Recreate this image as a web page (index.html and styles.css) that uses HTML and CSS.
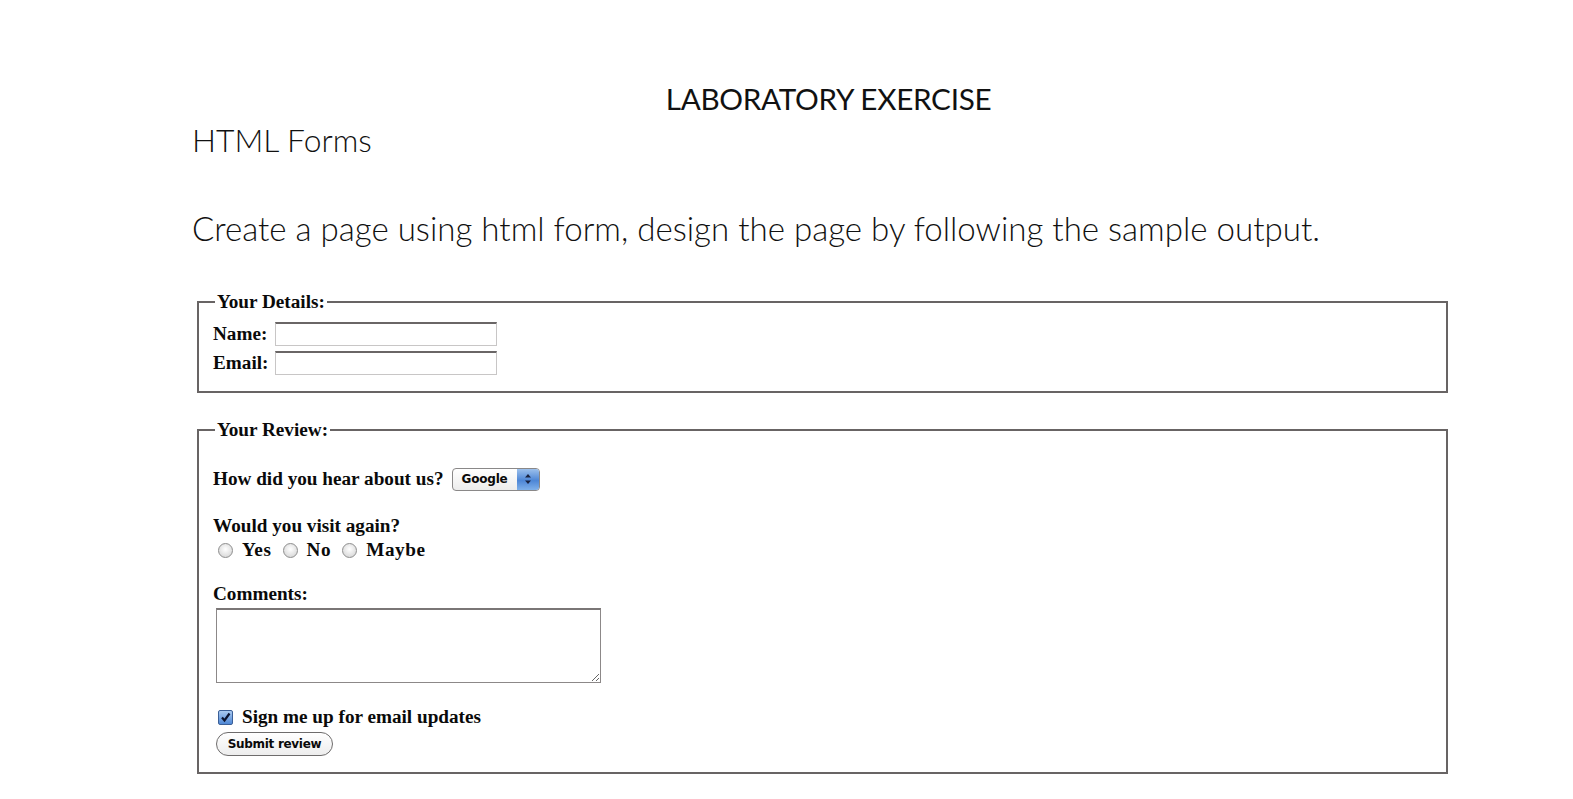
FILE: index.html
```html
<!DOCTYPE html>
<html lang="en">
<head>
<meta charset="utf-8">
<title>Laboratory Exercise</title>
<link rel="stylesheet" href="styles.css">
</head>
<body>
<main class="page">
  <h1 class="title">LABORATORY EXERCISE</h1>
  <h2 class="subtitle">HTML Forms</h2>
  <p class="instructions">Create a page using html form, design the page by following the sample output.</p>

  <form class="sample">
    <fieldset class="fs fs-details">
      <legend class="legend">Your Details:</legend>
      <div class="row"><label class="lbl" for="name">Name:</label><input class="text" id="name" type="text"></div>
      <div class="row"><label class="lbl" for="email">Email:</label><input class="text" id="email" type="text"></div>
    </fieldset>

    <fieldset class="fs fs-review">
      <legend class="legend">Your Review:</legend>
      <div class="line hear">How did you hear about us?
        <span class="select">
          <span class="select-text">Google</span>
          <span class="select-arrows">
            <svg width="8" height="12" viewBox="0 0 8 12"><path d="M4 1 L7 4.5 H1 Z M4 11 L7 7.5 H1 Z" fill="#1a2340"/></svg>
          </span>
        </span>
      </div>
      <div class="line visit">Would you visit again?</div>
      <div class="line radios">
        <span class="radio"></span><span class="rlabel">Yes</span>
        <span class="radio"></span><span class="rlabel">No</span>
        <span class="radio"></span><span class="rlabel">Maybe</span>
      </div>
      <div class="line comments">Comments:</div>
      <textarea class="area"></textarea>
      <div class="line signup">
        <span class="check"><svg width="13" height="13" viewBox="0 0 13 13"><path d="M3 6.5 L5.5 9.5 L10.5 2.5" fill="none" stroke="#0c1430" stroke-width="2.2"/></svg></span>
        Sign me up for email updates
      </div>
      <div class="btn-row"><span class="button">Submit review</span></div>
    </fieldset>
  </form>
</main>
</body>
</html>
```

FILE: styles.css
```css
html, body {
  margin: 0;
  padding: 0;
  background: #ffffff;
}

.page {
  width: 1273px;
  margin-left: 192px;
  padding-top: 81px;
  color: #111;
}

.title {
  margin: 0;
  text-align: center;
  font-family: Lato, "Open Sans", sans-serif;
  font-weight: 400;
  font-size: 29.7px;
  line-height: 36px;
  letter-spacing: -0.3px;
}

.subtitle {
  margin: 5px 0 0 0;
  font-family: Lato, "Open Sans", sans-serif;
  font-weight: 300;
  font-size: 31.8px;
  line-height: 36px;
}

.instructions {
  margin: 51px 0 0 0;
  font-family: Lato, "Open Sans", sans-serif;
  font-weight: 300;
  font-size: 33.1px;
  line-height: 38px;
}

.sample {
  margin-top: 43px;
  width: 1256px;
  font-family: "Liberation Serif", "Times New Roman", serif;
  font-weight: 700;
  font-size: 19.2px;
  color: #0a0a0a;
}

.fs {
  margin: 0 0 0 5px;
  border: 2px solid #686464;
  padding: 0 14px 14px 14px;
  min-width: 0;
}

.fs-details {
  padding-top: 5px;
}

.legend {
  padding: 0 2px;
  margin-left: 2px;
  line-height: 24px;
}

.row {
  display: flex;
  align-items: center;
  height: 29px;
}

.lbl {
  width: 62px;
}

.text {
  box-sizing: border-box;
  width: 222px;
  height: 24px;
  margin: 0;
  border: 1px solid #c8c6c6;
  border-top: 2px solid #6a6666;
  background: #fff;
}

.fs-review {
  margin-top: 25px;
  padding-bottom: 16px;
}

.line {
  line-height: 24px;
  display: flex;
  align-items: center;
}

.hear {
  margin-top: 25px;
}

.select {
  display: inline-flex;
  align-items: stretch;
  box-sizing: border-box;
  width: 88px;
  height: 23px;
  margin-left: 8px;
  border: 1px solid #8a8888;
  border-radius: 4px;
  overflow: hidden;
  background: linear-gradient(#ffffff, #ececec);
  font-family: "DejaVu Sans", sans-serif;
  font-weight: 700;
  font-size: 12px;
  letter-spacing: -0.2px;
}

.select-text {
  flex: 1;
  display: flex;
  align-items: center;
  padding-left: 9px;
}

.select-arrows {
  width: 22px;
  display: flex;
  align-items: center;
  justify-content: center;
  background: linear-gradient(#9cc0ec, #4d86d6 55%, #7fb0ea);
}

.visit {
  margin-top: 23px;
}

.radio {
  display: inline-block;
  box-sizing: border-box;
  width: 15px;
  height: 15px;
  border-radius: 50%;
  border: 1px solid #8e8e8e;
  background: radial-gradient(circle at 50% 40%, #ffffff, #cfcfcf);
  margin: 0 9px 0 5px;
}

.rlabel {
  margin-right: 6px;
  letter-spacing: 0.6px;
}

.comments {
  margin-top: 20px;
}

.area {
  display: block;
  box-sizing: border-box;
  width: 385px;
  height: 75px;
  margin: 2px 0 0 3px;
  border: 1px solid #8c8888;
  border-top: 2px solid #7a7676;
  resize: both;
}

.signup {
  margin-top: 22px;
}

.check {
  display: inline-flex;
  align-items: center;
  justify-content: center;
  box-sizing: border-box;
  width: 15px;
  height: 15px;
  margin: 0 9px 0 5px;
  border: 1px solid #3b5f97;
  border-radius: 2px;
  background: linear-gradient(#a9c9f0, #4f88d6);
}

.btn-row {
  display: flex;
  margin-top: 3px;
}

.button {
  display: inline-flex;
  align-items: center;
  justify-content: center;
  box-sizing: border-box;
  width: 117px;
  height: 24px;
  margin-left: 3px;
  border: 1px solid #6e6c6c;
  border-radius: 12px;
  background: linear-gradient(#ffffff, #ededed);
  font-family: "DejaVu Sans", sans-serif;
  font-weight: 700;
  font-size: 12px;
  letter-spacing: -0.3px;
}
```
